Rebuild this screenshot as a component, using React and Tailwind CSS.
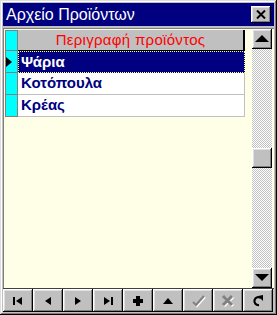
import React from "react";

const raised =
  "bg-[#c0c0c0] shadow-[inset_-1px_-1px_#000,inset_1px_1px_#fff,inset_-2px_-2px_#808080,inset_2px_2px_#dfdfdf]";

const rows = ["Ψάρια", "Κοτόπουλα", "Κρέας"];

const Tri = ({ dir = "up" }) => {
  const pts = {
    up: "1,7 8,0 15,7",
    down: "1,0 8,7 15,0",
  };
  return (
    <svg width="16" height="8" viewBox="0 0 16 8">
      <polygon points={pts[dir]} fill="#000" />
    </svg>
  );
};

const NavIcon = ({ kind }) => {
  switch (kind) {
    case "first":
      return (
        <svg width="12" height="10" viewBox="0 0 12 10">
          <rect x="1" y="1" width="2" height="8" fill="#000" />
          <polygon points="10,1 4,5 10,9" fill="#000" />
        </svg>
      );
    case "prev":
      return (
        <svg width="12" height="10" viewBox="0 0 12 10">
          <polygon points="9,1 3,5 9,9" fill="#000" />
        </svg>
      );
    case "next":
      return (
        <svg width="12" height="10" viewBox="0 0 12 10">
          <polygon points="3,1 9,5 3,9" fill="#000" />
        </svg>
      );
    case "last":
      return (
        <svg width="12" height="10" viewBox="0 0 12 10">
          <polygon points="2,1 8,5 2,9" fill="#000" />
          <rect x="9" y="1" width="2" height="8" fill="#000" />
        </svg>
      );
    case "add":
      return (
        <svg width="12" height="12" viewBox="0 0 12 12">
          <rect x="4" y="1" width="4" height="10" fill="#000" />
          <rect x="1" y="4" width="10" height="4" fill="#000" />
        </svg>
      );
    case "up":
      return (
        <svg width="12" height="8" viewBox="0 0 12 8">
          <polygon points="1,7 6,1 11,7" fill="#000" />
        </svg>
      );
    case "check":
      return (
        <svg width="16" height="14" viewBox="0 0 16 14">
          <path d="M3 8 L6 11 L14 2" stroke="#fff" strokeWidth="2" fill="none" transform="translate(1,1)" />
          <path d="M3 8 L6 11 L14 2" stroke="#808080" strokeWidth="2" fill="none" />
        </svg>
      );
    case "cancel":
      return (
        <svg width="14" height="14" viewBox="0 0 14 14">
          <path d="M2 2 L11 11 M11 2 L2 11" stroke="#fff" strokeWidth="3" fill="none" transform="translate(1,1)" />
          <path d="M2 2 L11 11 M11 2 L2 11" stroke="#808080" strokeWidth="3" fill="none" />
        </svg>
      );
    default:
      return (
        <svg width="12" height="13" viewBox="0 0 12 13">
          <path d="M9 4 A4 4 0 1 0 7 11" stroke="#000" strokeWidth="2.2" fill="none" />
          <polygon points="6,2 11,1 11,7" fill="#000" />
        </svg>
      );
  }
};

export default function App() {
  const tools = ["first", "prev", "next", "last", "add", "up", "check", "cancel", "refresh"];
  return (
    <div className="w-[277px] h-[315px] bg-[#c0c0c0] p-[2px] shadow-[inset_-1px_-1px_#000,inset_1px_1px_#dfdfdf,inset_-2px_-2px_#808080,inset_2px_2px_#fff] font-['Liberation_Sans',Arial,sans-serif] flex flex-col">
      {/* title bar */}
      <div className="h-[23px] bg-[#000080] flex items-center justify-between pl-[3px] pr-[3px] mx-[1px] mt-[1px]">
        <span className="text-white text-[16px] leading-none">Αρχείο Προϊόντων</span>
        <div className={`${raised} w-[20px] h-[17px] flex items-center justify-center`}>
          <svg width="10" height="9" viewBox="0 0 10 9">
            <path d="M1 0.5 L9 8.5 M9 0.5 L1 8.5" stroke="#000" strokeWidth="2" />
          </svg>
        </div>
      </div>

      {/* grid area */}
      <div className="flex-1 mt-[2px] mx-[1px] bg-[#ffffe8] border-l border-t border-[#808080] flex">
        <div className="flex-1 pt-[1px] pl-[1px]">
          <div className="w-[240px]">
            {/* header */}
            <div className="flex h-[21px]">
              <div className="w-[13px] border border-[#808080] bg-[#00ffff]" />
              <div className="flex-1 bg-[#c0c0c0] border-r-2 border-b border-black flex items-center justify-center text-[#ff0000] text-[15px] tracking-[0.3px]">
                Περιγραφή προϊόντος
              </div>
            </div>
            {rows.map((r, i) => (
              <div key={r} className="flex h-[22px]">
                <div className="w-[13px] border-x border-b border-[#808080] bg-[#00ffff] flex items-center">
                  {i === 0 && (
                    <svg width="6" height="10" viewBox="0 0 6 10">
                      <polygon points="0,0 6,5 0,10" fill="#000" />
                    </svg>
                  )}
                </div>
                <div
                  className={
                    i === 0
                      ? "flex-1 bg-[#000080] text-white border border-dotted border-[#ffff80] flex items-center pl-[2px] text-[15px] font-bold"
                      : "flex-1 bg-white text-[#000080] border-r border-b border-[#c0c0c0] flex items-center pl-[3px] text-[15px] font-bold"
                  }
                >
                  {r}
                </div>
              </div>
            ))}
          </div>
        </div>

        {/* scrollbar */}
        <div className="w-[20px] mr-[2px] flex flex-col bg-[image:repeating-conic-gradient(#c0c0c0_0%_25%,#ffffff_0%_50%)] bg-[length:2px_2px]">
          <div className={`${raised} h-[20px] flex items-center justify-center`}>
            <Tri dir="up" />
          </div>
          <div className="h-[99px]" />
          <div className={`${raised} h-[20px]`} />
          <div className="flex-1" />
          <div className={`${raised} h-[20px] flex items-center justify-center`}>
            <Tri dir="down" />
          </div>
        </div>
      </div>

      {/* toolbar */}
      <div className="h-[24px] mx-[1px] mb-[1px] flex border-t border-[#404040]">
        {tools.map((t) => (
          <div key={t} className={`${raised} w-[30px] flex items-center justify-center`}>
            <NavIcon kind={t} />
          </div>
        ))}
      </div>
    </div>
  );
}
